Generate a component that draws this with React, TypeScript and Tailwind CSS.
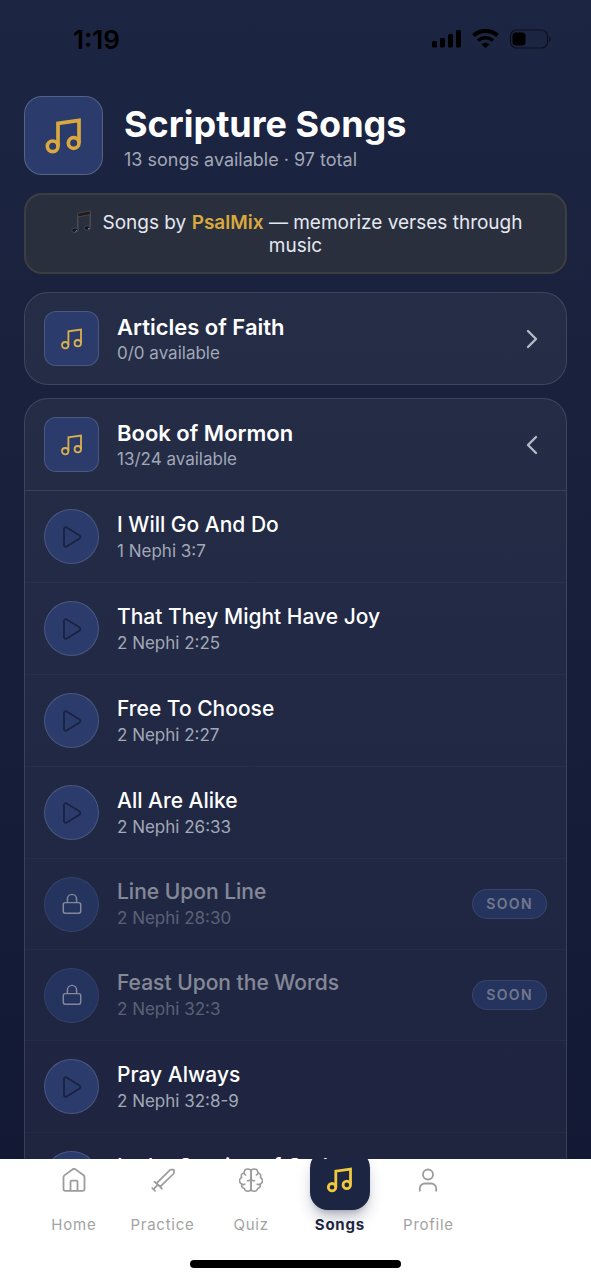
import React, { useState } from 'react';
import { ChevronLeft, ChevronRight } from 'lucide-react';

interface Song {
  title: string;
  verse: string;
  available: boolean;
}

interface IconProps {
  className?: string;
  strokeWidth?: number;
}

const songs: Song[] = [
  { title: 'I Will Go And Do', verse: '1 Nephi 3:7', available: true },
  { title: 'That They Might Have Joy', verse: '2 Nephi 2:25', available: true },
  { title: 'Free To Choose', verse: '2 Nephi 2:27', available: true },
  { title: 'All Are Alike', verse: '2 Nephi 26:33', available: true },
  { title: 'Line Upon Line', verse: '2 Nephi 28:30', available: false },
  { title: 'Feast Upon the Words', verse: '2 Nephi 32:3', available: false },
  { title: 'Pray Always', verse: '2 Nephi 32:8-9', available: true },
  { title: 'In the Service of God', verse: 'Mosiah 2:17', available: true },
];

const MusicIcon: React.FC<IconProps> = ({ className, strokeWidth = 1.8 }) => (
  <svg viewBox="0 0 24 24" fill="none" stroke="currentColor" strokeWidth={strokeWidth} className={className} aria-hidden="true">
    <path d="M8.4 18V4.4L21 2.6V16" />
    <circle cx="5.2" cy="18.2" r="3.2" />
    <circle cx="17.8" cy="16.2" r="3.2" />
  </svg>
);

const PlayIcon: React.FC<IconProps> = ({ className }) => (
  <svg viewBox="0 0 24 24" fill="none" stroke="currentColor" strokeWidth="1.8" strokeLinejoin="round" className={className} aria-hidden="true">
    <path d="M4 4.1c0-1.6 1.3-2.4 2.6-1.7l12.7 7.9c1.4.8 1.4 2.6 0 3.4L6.6 21.6C5.3 22.3 4 21.5 4 19.9z" />
  </svg>
);

const LockIcon: React.FC<IconProps> = ({ className }) => (
  <svg viewBox="0 0 24 24" fill="none" stroke="currentColor" strokeWidth="1.6" strokeLinejoin="round" className={className} aria-hidden="true">
    <rect x="2.5" y="10.5" width="19" height="11.5" rx="2" />
    <path d="M7 10.5v-4a5 5 0 0 1 10 0v4" />
  </svg>
);

const HomeIcon: React.FC<IconProps> = ({ className }) => (
  <svg viewBox="0 0 24 24" fill="none" stroke="currentColor" strokeWidth="1.8" strokeLinejoin="round" className={className} aria-hidden="true">
    <path d="M1.5 9.5a3 3 0 0 1 1.2-2.4l7.8-5.7a2.5 2.5 0 0 1 3 0l7.8 5.7a3 3 0 0 1 1.2 2.4V21a1.8 1.8 0 0 1-1.8 1.8H3.3A1.8 1.8 0 0 1 1.5 21z" />
    <path d="M8.5 22.8v-9a1.2 1.2 0 0 1 1.2-1.2h4.6a1.2 1.2 0 0 1 1.2 1.2v9" />
  </svg>
);

const SwordIcon: React.FC<IconProps> = ({ className }) => (
  <svg viewBox="0 0 24 24" fill="none" stroke="currentColor" strokeWidth="1.7" strokeLinejoin="round" strokeLinecap="round" className={className} aria-hidden="true">
    <path d="M5.4 15.4L18.6 2.3c.4-.4.8-.6 1.3-.6l2.4-.1c.5 0 .8.3.8.8l-.2 2.3c0 .5-.2.9-.6 1.3L9.2 18.7z" />
    <path d="M3.2 13.8c1 .1 1.6.8 2.2 1.6l3.8 3.3c.8.6 1.5 1.2 1.7 2.2M6 17.6l-3.4 3.5M1.3 20.2l2.7 2.6" />
  </svg>
);

const BrainIcon: React.FC<IconProps> = ({ className }) => (
  <svg viewBox="0 0 24 24" fill="none" stroke="currentColor" strokeWidth="1.6" strokeLinejoin="round" strokeLinecap="round" className={className} aria-hidden="true">
    <path d="M12 3.5v17.2c0 1.5-1.4 2.5-3.2 2.5-1.9 0-3.2-1-3.4-2.7C3 20 2.2 18 2.9 16.2.9 15.2.2 13.2.7 11.6c.3-1.1 1-1.8 1.9-2.2C1.7 7.2 2.9 5 5.1 4.7 5.2 2.5 6.8 1 8.8 1 10.7 1 12 2 12 3.5z" />
    <path d="M12 3.5v17.2c0 1.5 1.4 2.5 3.2 2.5 1.9 0 3.2-1 3.4-2.7 2.4-.5 3.2-2.5 2.5-4.3 2-1 2.7-3 2.2-4.6-.3-1.1-1-1.8-1.9-2.2.9-2.2-.3-4.4-2.5-4.7C18.8 2.5 17.2 1 15.2 1 13.3 1 12 2 12 3.5z" />
    <path d="M5.1 4.7c0 1.1.5 1.9 1.5 2.3M18.9 4.7c0 1.1-.5 1.9-1.5 2.3M2.9 16.2c.9.5 1.9.5 2.9 0M21.1 16.2c-.9.5-1.9.5-2.9 0M8.4 12.8c2 0 3.3-.8 3.6-2.5.3 1.7 1.6 2.5 3.6 2.5" />
  </svg>
);

const ProfileIcon: React.FC<IconProps> = ({ className }) => (
  <svg viewBox="0 0 24 24" fill="none" stroke="currentColor" strokeWidth="1.8" strokeLinecap="round" className={className} aria-hidden="true">
    <circle cx="12" cy="6.5" r="5" />
    <path d="M3.8 22.8v-2.3a5 5 0 0 1 5-5h6.4a5 5 0 0 1 5 5v2.3" />
  </svg>
);

// Dark glossy note shown in front of the banner text
const NoteGlyph: React.FC = () => (
  <svg viewBox="0 0 24 26" className="mr-2.5 inline size-6 align-text-bottom" aria-hidden="true">
    <path d="M8.5 21V4M22 2v17" fill="none" stroke="#4a4d56" strokeWidth="1.5" />
    <path d="M8.5 3.5L22 1v4L8.5 7.5z" fill="#1b1c22" stroke="#5c4d49" strokeWidth=".8" />
    <ellipse cx="5.5" cy="22" rx="3.5" ry="2.5" fill="#15171e" stroke="#4d535f" strokeWidth=".8" />
    <ellipse cx="18.8" cy="19.5" rx="3.5" ry="2.5" fill="#15171e" stroke="#4d535f" strokeWidth=".8" />
    <path d="M6 23.2l2-1M19.5 20.7l2-1" stroke="#9aa9c4" strokeWidth="1" />
  </svg>
);

const StatusBar: React.FC = () => (
  <div className="flex h-[78px] shrink-0 items-center justify-between pr-10 pl-[73px] text-black">
    <span className="text-[26px] font-semibold">1:19</span>
    <svg viewBox="0 0 120 22" className="h-[22px] w-[120px]" aria-hidden="true">
      <rect x="1" y="13" width="5" height="6.5" rx="1.5" />
      <rect x="9" y="10" width="5" height="9.5" rx="1.5" />
      <rect x="17" y="6" width="5" height="13.5" rx="1.5" />
      <rect x="25" y="2" width="5" height="17.5" rx="1.5" />
      <path d="M42.5 7.5a18 18 0 0 1 24 0" fill="none" stroke="black" strokeWidth="4" />
      <path d="M47 12.5a12 12 0 0 1 15 0" fill="none" stroke="black" strokeWidth="3.5" />
      <path d="M50.5 16.2a6.500 6.500 0 0 1 8 0l-4 4z" />
      <rect x="79.5" y="2" width="37" height="18" rx="6" fill="none" stroke="black" strokeOpacity=".55" strokeWidth="1.2" />
      <rect x="81.5" y="4.5" width="13" height="13" rx="3.5" />
      <path d="M118.2 8.5c2 .8 2 4.500 0 5.500z" fillOpacity=".55" />
    </svg>
  </div>
);

const CategoryHeader: React.FC<{ name: string; count: string; open: boolean; onToggle: () => void }> = ({ name, count, open, onToggle }) => (
  <button onClick={onToggle} className="flex w-full items-center px-[18px] py-[18px] pl-[19px] text-left">
    <span className="mr-[18px] flex size-[55px] shrink-0 items-center justify-center rounded-xl border border-white/15 bg-[#2b3b6b] text-[#d9b04c]">
      <MusicIcon className="size-6" />
    </span>
    <span className="flex-1">
      <span className="block text-[22px] leading-7 font-semibold text-white">{name}</span>
      <span className="block text-[17px] leading-6 text-[#a2a8b7]">{count}</span>
    </span>
    {open ? (
      <ChevronLeft className="size-8 text-[#b5bac6]" strokeWidth={1.8} />
    ) : (
      <ChevronRight className="size-8 text-[#b5bac6]" strokeWidth={1.8} />
    )}
  </button>
);

const SongRow: React.FC<{ song: Song }> = ({ song }) => (
  <li className={`border-b border-white/3 ${song.available ? 'h-[92px]' : 'h-[91px]'}`}>
    <button
      disabled={!song.available}
      className={`flex h-full w-full items-center px-[19px] text-left ${song.available ? '' : 'opacity-45'}`}
    >
      <span
        className={`mr-[18px] flex size-[55px] shrink-0 items-center justify-center rounded-full border border-white/15 ${
          song.available ? 'bg-[#2b3b6b]' : 'bg-[#2c4582]'
        }`}
      >
        {song.available ? (
          <PlayIcon className="size-6 text-[#1a2240]" />
        ) : (
          <LockIcon className="size-[22px] text-white" />
        )}
      </span>
      <span className="flex-1">
        <span className="block text-[21px] leading-7 font-medium text-white">{song.title}</span>
        <span className="block text-[17px] leading-6 text-[#a2a8b7]">{song.verse}</span>
      </span>
      {!song.available && (
        <span className="rounded-full border border-white/20 bg-[#2c4582] px-[13px] py-1 text-sm leading-5 font-semibold tracking-widest text-[#d4d9e4]">
          SOON
        </span>
      )}
    </button>
  </li>
);

const tabs = [
  { label: 'Home', icon: HomeIcon },
  { label: 'Practice', icon: SwordIcon },
  { label: 'Quiz', icon: BrainIcon },
  { label: 'Songs', icon: MusicIcon },
  { label: 'Profile', icon: ProfileIcon },
];

const App: React.FC = () => {
  const [openCategory, setOpenCategory] = useState<string | null>('mormon');
  const [activeTab, setActiveTab] = useState('Songs');

  const toggle = (id: string) => setOpenCategory(openCategory === id ? null : id);

  return (
    <div className="flex h-screen flex-col bg-linear-to-b from-[#1c2541] to-[#121834] font-['Inter',sans-serif]">
      <StatusBar />

      <main className="min-h-0 flex-1 overflow-y-auto px-6 pt-[18px] [scrollbar-width:none]">
        <header className="mb-[18px] flex items-center">
          <div className="mr-[21px] flex size-[79px] shrink-0 items-center justify-center rounded-[18px] border border-white/20 bg-[#2b3b6b] text-[#d9a93f]">
            <MusicIcon className="size-10" strokeWidth={2.2} />
          </div>
          <div>
            <h1 className="text-[36px] leading-[48px] font-bold text-white">Scripture Songs</h1>
            <p className="text-[18px] leading-6 text-[#a2a8b7]">13 songs available · 97 total</p>
          </div>
        </header>

        <p className="mb-[18px] rounded-[18px] border-2 border-[#3d3e42] bg-[#2a2f3d] px-8 py-[15px] text-center text-[19px] leading-[23px] text-[#e4e8f2]">
          <NoteGlyph />
          Songs by <span className="font-semibold text-[#d9a93f]">PsalMix</span> — memorize verses through music
        </p>

        <section className="mb-[13px] rounded-3xl border border-white/12 bg-white/5">
          <CategoryHeader name="Articles of Faith" count="0/0 available" open={openCategory === 'faith'} onToggle={() => toggle('faith')} />
        </section>

        <section className="rounded-3xl border border-white/12 bg-white/5">
          <CategoryHeader name="Book of Mormon" count="13/24 available" open={openCategory === 'mormon'} onToggle={() => toggle('mormon')} />
          {openCategory === 'mormon' && (
            <ul className="border-t border-white/10">
              {songs.map(song => (
                <SongRow key={song.verse} song={song} />
              ))}
            </ul>
          )}
        </section>
      </main>

      <nav className="shrink-0 overflow-hidden bg-white">
        <div className="ml-[5%] grid w-3/4 grid-cols-5">
          {tabs.map(({ label, icon: Icon }) => {
            const active = activeTab === label;
            return (
              <button key={label} onClick={() => setActiveTab(label)} className="flex flex-col items-center">
                <span
                  className={`-mt-[9px] mb-[5px] flex size-[60px] items-center justify-center rounded-[18px] ${
                    active ? 'bg-[#1c2541] text-[#f0c93d] shadow-lg shadow-[#1c2541]/30' : 'text-[#9c9c9c]'
                  }`}
                >
                  <Icon className={active ? 'size-7' : 'size-6'} strokeWidth={active ? 2.4 : 1.7} />
                </span>
                <span className={`text-[15px] leading-5 tracking-wider ${active ? 'font-bold text-[#1c2541]' : 'text-[#a3a3a3]'}`}>
                  {label}
                </span>
              </button>
            );
          })}
        </div>
        <div className="mx-auto mt-[25px] mb-3 h-2 w-[211px] rounded-full bg-black" />
      </nav>
    </div>
  );
};

export default App;
